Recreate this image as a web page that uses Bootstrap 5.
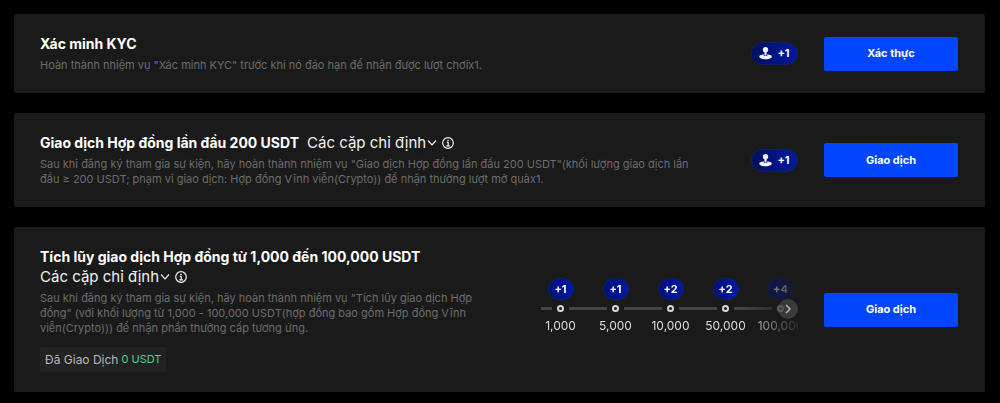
<!DOCTYPE html>
<html lang="vi">
<head>
<meta charset="utf-8">
<meta name="viewport" content="width=device-width, initial-scale=1">
<title>Nhiệm vụ</title>
<link href="https://cdn.jsdelivr.net/npm/bootstrap@5.3.0/dist/css/bootstrap.min.css" rel="stylesheet">
<style>
  body { background: #000; color: #fff; font-family: "Inter", "Noto Sans", sans-serif; }
  .tasks { padding: 14px 15px 11px 14px; gap: 20px; }
  .task { background: #1a1a1a; border-radius: 2px; padding: 20px 27px 20px 26px; }
  .task-body { min-width: 0; }
  .task-head { column-gap: 8px; }
  .task-title { font-size: 14px; line-height: 20px; font-weight: 700; margin: 0; }
  .pairs { color: #f2f2f2; font-size: 15px; line-height: 20px; font-weight: 400; gap: 1px; }
  .info { width: 12px; height: 12px; margin-left: 4px; }
  .task-desc { color: #6c6c6c; font-size: 11px; line-height: 15px; margin: 4px 0 0; }
  .traded { background: #222; color: #b8b8b8; font-size: 12px; height: 25px; padding: 0 5px; margin-top: 11px; border-radius: 2px; gap: 3px; width: fit-content; }
  .traded b { color: #4fd08a; font-size: 11px; font-weight: 400; }
  .btn-task { --bs-btn-color: #fff; --bs-btn-bg: #0046ff; --bs-btn-hover-color: #fff; --bs-btn-hover-bg: #1f5cff;
    --bs-btn-border-width: 0; --bs-btn-border-radius: 2px; --bs-btn-padding-y: 0;
    width: 134px; height: 34px; font-size: 11px; font-weight: 700; margin-left: 26px; }
  .bonus { background: linear-gradient(90deg, #000f5c, #0018a0); border: 1px solid #0b2468; font-size: 11px; font-weight: 700; line-height: 21px; }
  .bonus-wide { width: 47px; gap: 5px; margin-left: 26px; }
  .bonus-step { width: 26px; line-height: 20px; background: linear-gradient(90deg, #000f78, #0018a8); }
  .steps { width: 257px; margin-left: 28px; padding-bottom: 8px; }
  .steps-window { mask-image: linear-gradient(90deg, #000 78%, rgba(0,0,0,.35) 93%, rgba(0,0,0,.1) 100%);
    -webkit-mask-image: linear-gradient(90deg, #000 78%, rgba(0,0,0,.35) 93%, rgba(0,0,0,.1) 100%); }
  .steps-list { margin: 0 0 0 -8px; }
  .step { flex: 0 0 55px; }
  .track { height: 18px; gap: 5px; }
  .track::before, .track::after { content: ""; flex: 1; height: 3px; background: #454545; }
  .dot { width: 7px; height: 7px; border: 2px solid #d8d8d8; border-radius: 50%; }
  .step-value { color: #dedede; font-size: 12px; line-height: 16px; }
  .next { width: 20px; height: 20px; right: 0; top: 21px; background: rgba(90,90,90,.5); color: #b4b4b4; }
  .wide-only { display: none; }
  @media (min-width: 900px) { .wide-only { display: inline; } }
</style>
</head>
<body>
<svg class="d-none" aria-hidden="true">
  <symbol id="joystick" viewBox="0 0 13 13"><g fill="#eef0ff"><circle cx="6.500" cy="2.800" r="2.700"/><path d="M5.500 4.500h2v4h-2z"/><path d="M4.700 7.200 1.200 8.200Q0.300 8.600 0.300 9.300v0.700Q0.500 10.900 2 11.500q4.500 1.700 9 0 1.500-.6 1.700-1.500v-.7q0-.7-.9-1.100L8.300 7.200v1.500q-1.800.8-3.600 0z"/></g></symbol>
  <symbol id="chevron" viewBox="0 0 10 10"><path d="M1 2.500l4 4.300 4-4.300" fill="none" stroke="currentColor" stroke-width="1.200"/></symbol>
  <symbol id="info" viewBox="0 0 12 12"><g fill="none" stroke="currentColor" stroke-width="1.200"><circle cx="6" cy="6" r="5.300"/><path d="M4.700 5.300H6.200V8.600M4.300 8.800h3.600M5.300 3.300h1.400"/></g></symbol>
</svg>
<main class="tasks d-flex flex-column">

  <section class="task d-flex align-items-center">
    <div class="task-body flex-grow-1">
      <h2 class="task-title">Xác minh KYC</h2>
      <p class="task-desc">Hoàn thành nhiệm vụ "Xác minh KYC" trước khi nó đáo hạn để nhận được lượt chơix1.</p>
    </div>
    <span class="bonus bonus-wide rounded-pill d-flex align-items-center justify-content-center flex-shrink-0"><svg width="13" height="13" aria-hidden="true"><use href="#joystick"/></svg>+1</span>
    <button type="button" class="btn btn-task flex-shrink-0">Xác thực</button>
  </section>

  <section class="task d-flex align-items-center">
    <div class="task-body flex-grow-1">
      <div class="task-head d-flex flex-wrap align-items-center">
        <h2 class="task-title">Giao dịch Hợp đồng lần đầu 200 USDT</h2>
        <button type="button" class="pairs btn border-0 p-0 d-flex align-items-center">Các cặp chỉ định
          <svg width="10" height="10" aria-hidden="true"><use href="#chevron"/></svg>
          <svg class="info" aria-hidden="true"><use href="#info"/></svg>
        </button>
      </div>
      <p class="task-desc">Sau khi đăng ký tham gia sự kiện, hãy hoàn thành nhiệm vụ "Giao dịch Hợp đồng lần đầu 200 USDT"(khối lượng giao dịch lần <br class="wide-only">đầu ≥ 200 USDT; phạm vi giao dịch: Hợp đồng Vĩnh viễn(Crypto)) để nhận thưởng lượt mở quàx1.</p>
    </div>
    <span class="bonus bonus-wide rounded-pill d-flex align-items-center justify-content-center flex-shrink-0"><svg width="13" height="13" aria-hidden="true"><use href="#joystick"/></svg>+1</span>
    <button type="button" class="btn btn-task flex-shrink-0">Giao dịch</button>
  </section>

  <section class="task d-flex align-items-center">
    <div class="task-body flex-grow-1">
      <div class="task-head d-flex flex-wrap align-items-center">
        <h2 class="task-title">Tích lũy giao dịch Hợp đồng từ 1,000 đến 100,000 USDT</h2>
        <button type="button" class="pairs btn border-0 p-0 d-flex align-items-center">Các cặp chỉ định
          <svg width="10" height="10" aria-hidden="true"><use href="#chevron"/></svg>
          <svg class="info" aria-hidden="true"><use href="#info"/></svg>
        </button>
      </div>
      <p class="task-desc">Sau khi đăng ký tham gia sự kiện, hãy hoàn thành nhiệm vụ "Tích lũy giao dịch Hợp <br class="wide-only">đồng" (với khối lượng từ 1,000 - 100,000 USDT(hợp đồng bao gồm Hợp đồng Vĩnh <br class="wide-only">viễn(Crypto))) để nhận phần thưởng cấp tương ứng.</p>
      <div class="traded d-flex align-items-center">Đã Giao Dịch <b>0 USDT</b></div>
    </div>
    <div class="steps position-relative flex-shrink-0">
      <div class="steps-window overflow-hidden">
        <ol class="steps-list list-unstyled d-flex text-center">
          <li class="step"><div class="bonus bonus-step rounded-pill mx-auto">+1</div><div class="track d-flex align-items-center"><i class="dot"></i></div><div class="step-value">1,000</div></li>
          <li class="step"><div class="bonus bonus-step rounded-pill mx-auto">+1</div><div class="track d-flex align-items-center"><i class="dot"></i></div><div class="step-value">5,000</div></li>
          <li class="step"><div class="bonus bonus-step rounded-pill mx-auto">+2</div><div class="track d-flex align-items-center"><i class="dot"></i></div><div class="step-value">10,000</div></li>
          <li class="step"><div class="bonus bonus-step rounded-pill mx-auto">+2</div><div class="track d-flex align-items-center"><i class="dot"></i></div><div class="step-value">50,000</div></li>
          <li class="step"><div class="bonus bonus-step rounded-pill mx-auto">+4</div><div class="track d-flex align-items-center"><i class="dot"></i></div><div class="step-value">100,000</div></li>
        </ol>
      </div>
      <button type="button" class="next btn border-0 p-0 rounded-circle position-absolute d-flex align-items-center justify-content-center" aria-label="Tiếp">
        <svg width="10" height="10" viewBox="0 0 10 10" fill="none" stroke="currentColor" stroke-width="1.500" aria-hidden="true"><path d="M3 1l4 4-4 4"/></svg>
      </button>
    </div>
    <button type="button" class="btn btn-task flex-shrink-0">Giao dịch</button>
  </section>

</main>
<script src="https://cdn.jsdelivr.net/npm/bootstrap@5.3.0/dist/js/bootstrap.bundle.min.js"></script>
</body>
</html>
